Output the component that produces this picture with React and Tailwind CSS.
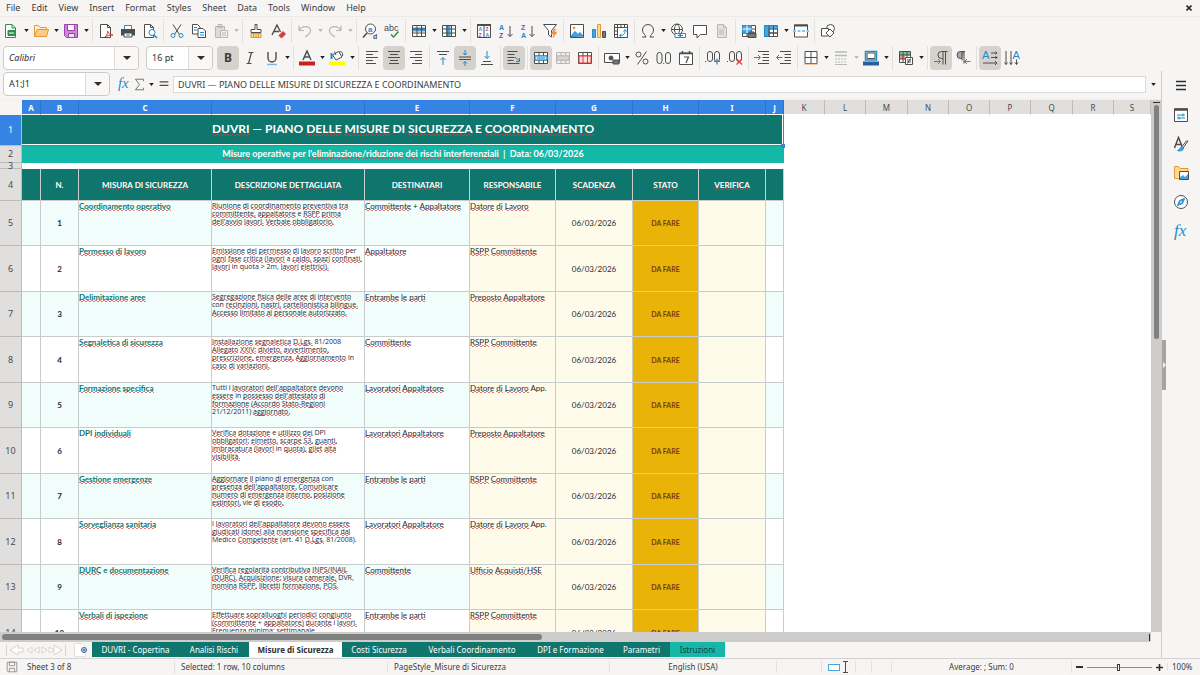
// App.jsx
import { useState } from "react"

const MENUS = ["File", "Edit", "View", "Insert", "Format", "Styles", "Sheet", "Data", "Tools", "Window", "Help"]

const TITOLO = "DUVRI — PIANO DELLE MISURE DI SICUREZZA E COORDINAMENTO"

// Parole che il correttore inglese non segnala
const PAROLE_OK = new Set([
  "a", "e", "i", "I", "in", "per", "con", "Tutti", "DPI", "piano", "Medico", "vie", "quota", "DVR,",
  "—", "E", "DI", "PIANO", "operative", "Data:", "|", "+", ">", "N.", "App.", "(art.",
])

const MISURE = [
  { misura: "Coordinamento operativo", righe: ["Riunione di coordinamento preventiva tra", "committente, appaltatore e RSPP prima", "dell'avvio lavori. Verbale obbligatorio."], dest: "Committente + Appaltatore", resp: "Datore di Lavoro" },
  { misura: "Permesso di lavoro", righe: ["Emissione del permesso di lavoro scritto per", "ogni fase critica (lavori a caldo, spazi confinati,", "lavori in quota > 2m, lavori elettrici)."], dest: "Appaltatore", resp: "RSPP Committente" },
  { misura: "Delimitazione aree", righe: ["Segregazione fisica delle aree di intervento", "con recinzioni, nastri, cartellonistica bilingue.", "Accesso limitato al personale autorizzato."], dest: "Entrambe le parti", resp: "Preposto Appaltatore" },
  { misura: "Segnaletica di sicurezza", righe: ["Installazione segnaletica D.Lgs. 81/2008", "Allegato XXIV: divieto, avvertimento,", "prescrizione, emergenza. Aggiornamento in", "caso di variazioni."], dest: "Committente", resp: "RSPP Committente" },
  { misura: "Formazione specifica", righe: ["Tutti i lavoratori dell'appaltatore devono", "essere in possesso dell'attestato di", "formazione (Accordo Stato-Regioni", "21/12/2011) aggiornato."], dest: "Lavoratori Appaltatore", resp: "Datore di Lavoro App." },
  { misura: "DPI individuali", righe: ["Verifica dotazione e utilizzo dei DPI", "obbligatori: elmetto, scarpe S3, guanti,", "imbracatura (lavori in quota), gilet alta", "visibilità."], dest: "Lavoratori Appaltatore", resp: "Preposto Appaltatore" },
  { misura: "Gestione emergenze", righe: ["Aggiornare il piano di emergenza con", "presenza dell'appaltatore. Comunicare", "numero di emergenza interno, posizione", "estintori, vie di esodo."], dest: "Entrambe le parti", resp: "RSPP Committente" },
  { misura: "Sorveglianza sanitaria", righe: ["I lavoratori dell'appaltatore devono essere", "giudicati idonei alla mansione specifica dal", "Medico Competente (art. 41 D.Lgs. 81/2008)."], dest: "Lavoratori Appaltatore", resp: "Datore di Lavoro App." },
  { misura: "DURC e documentazione", righe: ["Verifica regolarità contributiva INPS/INAIL", "(DURC). Acquisizione: visura camerale, DVR,", "nomina RSPP, libretti formazione, POS."], dest: "Committente", resp: "Ufficio Acquisti/HSE" },
  { misura: "Verbali di ispezione", righe: ["Effettuare sopralluoghi periodici congiunto", "(committente + appaltatore) durante i lavori.", "Frequenza minima: settimanale."], dest: "Entrambe le parti", resp: "RSPP Committente" },
]

const INTESTAZIONI = ["", "N.", "MISURA DI SICUREZZA", "DESCRIZIONE DETTAGLIATA", "DESTINATARI", "RESPONSABILE", "SCADENZA", "STATO", "VERIFICA", ""]

const COL_USATE = ["A", "B", "C", "D", "E", "F", "G", "H", "I", "J"]
const COL_VUOTE = ["K", "L", "M", "N", "O", "P", "Q", "R", "S"]

const FOGLI = [
  { nome: "DUVRI - Copertina", w: "w-[87px]" },
  { nome: "Analisi Rischi", w: "w-[70px]" },
  { nome: "Misure di Sicurezza", w: "w-[93px]" },
  { nome: "Costi Sicurezza", w: "w-[74px]" },
  { nome: "Verbali Coordinamento", w: "w-[112px]" },
  { nome: "DPI e Formazione", w: "w-[85px]" },
  { nome: "Parametri", w: "w-[57px]" },
  { nome: "Istruzioni", w: "w-[55px]" },
]

const K = "#4d4d4b"
const B = "#1e8bcd"
const R = "#e0383a"
const O = "#e8963c"
const G = "#309048"
const V = "#a13db0"
const L = "#b9b8b6"

const T = ({ x, y, s = 7, c = K, children, b }) => (
  <text x={x} y={y} fontSize={s} fill={c} stroke="none" fontFamily="Liberation Sans, sans-serif" fontWeight={b ? 700 : 400}>
    {children}
  </text>
)

const foglio = "M3.5 1.5h6l3 3v10h-9z M9.5 1.5v3h3"
const griglia = "M1.5 2.5h13v11h-13z M1.5 6h13 M1.5 10h13 M6 2.5v11 M10.500 2.500v11"

const ICONS = {
  nuovo: <><path d="M2.500 1.500h6.500l3.500 3.500v9.500h-10z M9 1.500v3.500h3.500" stroke={G} fill="#fff" /><path d="M5 7.500h7v5h-7z" fill={G} stroke={G} /><path d="M6 10h5" stroke="#fff" /></>,
  apri: <><path d="M1.500 13.500v-11h4l1.500 2h6.500v9z" fill="#fff0d0" stroke={O} /><path d="M1.500 13.500l2.500-7h11.500l-2 7z" fill="#f8cf85" stroke={O} /></>,
  salva: <><path d="M1.500 1.500h13v13h-11l-2-2z" fill="#c98bd3" stroke={V} /><path d="M4.500 1.500h7v6h-7z" fill="#fff" stroke={V} /><path d="M5.500 14.500v-4h6v4z" fill="#f3e4f5" stroke={V} /></>,
  pdf: <><path d="M2.500 1.500h7l3 3v10h-10z M9.500 1.500v3h3" fill="#fff" /><path d="M7 14c2-2 3-4 2.500-6 1 3 3 4 5.500 4-3 0-6 .5-8 2z" stroke={R} fill="none" /></>,
  stampa: <><path d="M4.500 6v-3.500h7v3.500" fill="#fff" stroke={B} /><path d="M1 6h14v6.500h-14z" fill={K} stroke="none" /><path d="M4 10h8v4h-8z" fill="#fff" stroke={K} /><path d="M6 12h4" stroke={B} /></>,
  anteprima: <><path d={foglio} fill="#fff" transform="translate(-1 0)" /><circle cx="10" cy="9.500" r="3" fill="#fff" stroke={B} /><path d="M12 12l3 3" stroke={B} strokeWidth="1.500" /></>,
  taglia: <><path d="M4 1.500l6.500 10 M12 1.500l-6.500 10" /><circle cx="4" cy="12.500" r="2" stroke={B} fill="none" /><circle cx="12" cy="12.500" r="2" stroke={B} fill="none" /></>,
  copia: <><path d="M1.500 1.500h5l2.500 2.500v7h-7.500z" fill="#fff" /><path d="M7 5.500h5l2.500 2.500v6.500h-7.500z" fill="#fff" /><path d="M3 4.500h3 M3 7h3 M9 9.500h4 M9 12h4" stroke={B} /></>,
  incolla: <><path d="M2.500 3.500h9v11h-9z M5 1.500h4v3h-4z" fill="#dddcda" stroke={L} /><path d="M7.500 7.500h7v7h-7z" fill="#f1f0ef" stroke={L} /><path d="M9 10h4 M9 12h4" stroke={L} /></>,
  pennello: <><path d="M7 1.500h2v5h4v3h-10v-3h4z" fill="#fff" /><path d="M3 10.500h10v4h-10z" fill="#f8db8f" stroke={O} /><path d="M5.500 11v3 M8 11v3 M10.500 11v3" stroke={O} /></>,
  pulisci: <><path d="M2 12l5-10 3.500 7 M4 8.500h5" strokeWidth="1.400" fill="none" /><path d="M9 12.500l4-4 2.500 2.500-4 4z" fill={R} stroke={R} /></>,
  annulla: <path d="M2 2.500v5h5 M2.500 7c2-4 10-5 11 0 .5 3-2 5-5.500 7" stroke={L} fill="none" strokeWidth="1.200" />,
  ripeti: <path d="M14 2.500v5h-5 M13.500 7c-2-4-10-5-11 0-.5 3 2 5 5.500 7" stroke={L} fill="none" strokeWidth="1.200" />,
  trova: <><circle cx="8.500" cy="6" r="5" fill="#fff" /><path d="M5 10l-4 4.500" strokeWidth="1.500" /><T x="6" y="8.500" s="8" c={B} b>a</T><T x="11" y="15.500" s="7" b>d</T></>,
  abc: <><T x="0" y="8" s="9">abc</T><path d="M7 11.500l2.500 2.500 5-5.500" stroke={G} strokeWidth="1.500" fill="none" /></>,
  riga: <><path d="M1.500 2.500h13v11h-13z" fill="#fff" stroke="none" /><path d="M1.500 4.500h13v4h-13z" fill="#4ba3dc" stroke="none" /><path d={griglia} fill="none" /></>,
  colonna: <><path d="M1.500 2.500h13v11h-13z" fill="#fff" stroke="none" /><path d="M5 2.500h4.500v11h-4.500z" fill="#4ba3dc" stroke="none" /><path d={griglia} fill="none" /></>,
  ordina: <><path d="M1.500 1.500h13v13h-13z M8 3v11.500" fill="#fff" /><path d="M1 2h14" strokeWidth="2" /><T x="2.500" y="8" s="5" c={B} b>A</T><T x="2.500" y="14" s="5" c={V} b>Z</T><T x="9.500" y="8" s="5" c={V} b>Z</T><T x="9.500" y="14" s="5" c={B} b>A</T></>,
  az: <><T x="1" y="6.500" s="7" c={B} b>A</T><T x="1" y="15" s="7" c={V} b>Z</T><path d="M12 3v10.500 M9.500 11l2.500 2.500 2.500-2.500" fill="none" /></>,
  za: <><T x="1" y="6.500" s="7" c={V} b>Z</T><T x="1" y="15" s="7" c={B} b>A</T><path d="M12 3v10.500 M9.500 11l2.500 2.500 2.500-2.500" fill="none" /></>,
  filtro: <><path d="M1.500 1.500h13l-5 6v6.500l-3-2v-4.500z" fill="#fff" /><path d="M12 6l-3 5h3l-1 4 4-6h-3l2-3z" fill={O} stroke={O} strokeWidth=".5" /></>,
  immagine: <><path d="M1.500 1.500h13v13h-13z" fill="#fff" /><path d="M2 13.500l4-5 3 3 2-2 3 3.500z" fill="#4ba3dc" stroke={B} /><circle cx="5" cy="5" r="1.300" fill={O} stroke="none" /></>,
  grafico: <><path d="M1.500 6.500h3v8h-3z" fill="#4ba3dc" stroke={B} /><path d="M6.500 1.500h3v13h-3z" fill="#f8db8f" stroke={O} /><path d="M11.500 8.500h3v6h-3z" fill="#797774" stroke={K} /></>,
  pivot: <><path d="M1.500 1.500h13v13h-13z M1.500 4.500h13 M4.500 1.500v13 M8 1.500v3 M11.500 1.500v3 M1.500 8h3 M1.500 11.500h3" fill="#fff" /><path d="M7 12.500c4 0 5-2 5-5.500 M10.500 8.500l1.500-2 1.500 2 M8.500 11l-2 1.500 2 1.500" stroke={B} fill="none" /></>,
  omega: <path d="M2 14h4c0-2-3.500-3-3.500-7a5.500 5.500 0 0 1 11 0c0 4-3.500 5-3.500 7h4" fill="none" />,
  collegamento: <><circle cx="7" cy="6.500" r="5.500" fill="#fff" /><path d="M1.500 6.500h11 M7 1c-3.500 3-3.500 8 0 11 M7 1c3.500 3 3.500 8 0 11" fill="none" /><path d="M5 10.500h5v4h-5z M10.500 10.500h5v4h-5z" stroke={B} fill="#fff" /><path d="M7.500 12.500h5.500" stroke={B} /></>,
  commento: <path d="M1.500 2.500h13v9h-6l-3.500 3.500v-3.500h-3.500z" fill="#fff" />,
  intest: <><path d={foglio} fill="#e3e2e0" stroke={L} /><path d="M5 7h5 M5 9h5 M5 11h5" stroke={L} /></>,
  areaStampa: <><path d={griglia} fill="#fff" /><path d="M1.500 2.500h9v7.500h-9z" fill="#4ba3dc" stroke={B} /><path d="M1.500 6h9 M6 2.500v7.500" stroke="#fff" /><path d="M7 10.500h8v4h-8z M9 9h4v1.500h-4z" fill="#797774" /></>,
  blocca: <><path d={griglia} fill="#fff" /><path d="M1.500 2.500h13v3.500h-8.500v7.500h-4.500z" fill="#4ba3dc" stroke={B} /><path d="M6 2.500v11 M10.500 2.500v11 M6 10h8.500" fill="none" /></>,
  dividi: <><path d="M1.500 2h13v12h-13z" fill="#fff" stroke={K} /><path d="M1 2.500h14" strokeWidth="2" /><path d="M0 8h16" stroke="#fff" strokeWidth="2" /><path d="M0 8h16" stroke={B} strokeDasharray="3 1.500" /></>,
  forme: <><circle cx="10.500" cy="5.500" r="4" fill="#fff" /><path d="M1.500 5.500h7v7.500h-7z" fill="#fff" /><path d="M10 6l4 4-4 4-4-4z" fill="#fff" /></>,
  corsivo: <path d="M6.500 2.500h5 M4.500 13.500h5 M9.500 2.500l-3 11" fill="none" strokeWidth="1.200" />,
  sottolineato: <><path d="M4 2v6a4 4 0 0 0 8 0v-6" fill="none" strokeWidth="1.400" /><path d="M3 14.500h10" stroke="#7db9e8" strokeWidth="1.400" /></>,
  colore: <><path d="M4 10l4-9 4 9 M5.500 7h5" fill="none" strokeWidth="1.500" /><path d="M0 11.500h16v4h-16z" fill="#c9211e" stroke="none" /></>,
  evidenzia: <><path d="M3.500 5l6-3.500 3.500 5.500-6 3z" fill="#fff" /><path d="M7 5l-1.500-3.500 M10 2c3-1 4 1 3.500 4" fill="none" /><path d="M2.500 3v6" stroke={B} strokeWidth="2" /><path d="M0 11.500h16v4h-16z" fill="#ff0" stroke="none" /></>,
  sinistra: <path d="M2 1.500h12 M2 4.500h7 M2 7.500h12 M2 10.500h7 M2 13.500h10" />,
  centro: <path d="M2 1.500h12 M4 4.500h8 M2 7.500h12 M4 10.500h8 M3 13.500h10" />,
  destra: <path d="M2 1.500h12 M7 4.500h7 M2 7.500h12 M7 10.500h7 M4 13.500h10" />,
  alto: <><path d="M2 1.500h12 M4 4.500h8" /><path d="M8 15v-7.500 M5.500 10l2.500-2.500 2.500 2.500" stroke={B} fill="none" /></>,
  mezzo: <><path d="M2 7h12 M2 9.500h12" /><path d="M8 0v5 M6 3l2 2 2-2 M8 16v-4.500 M6 13.500l2-2 2 2" stroke={B} fill="none" /></>,
  basso: <><path d="M4 11.500h8 M2 14.500h12" /><path d="M8 1v7.500 M5.500 6l2.500 2.500 2.500-2.500" stroke={B} fill="none" /></>,
  aCapo: <><path d="M1.500 1.500h10 M1.500 4.500h7 M1.500 7.500h7 M1.500 10.500h6 M1.500 13.500h12" /><path d="M9 7l4.500 4 M13.500 8v3.500h-3.500" stroke={B} fill="none" /></>,
  unisciC: <><path d={griglia} fill="#fff" /><path d="M2 6h12v4h-12z" fill="#d5e9f8" stroke={B} /><path d="M4 8h8" stroke={B} /></>,
  unisci: <><path d={griglia} fill="#eeedec" stroke={L} /><path d="M2 6h12v4h-12z" fill="#d8d7d5" stroke={L} /></>,
  dividiC: <><path d={griglia} fill="#fff" /><path d="M2 6h12v7h-12z M6 6v7 M10.500 6v7" fill="#fbe1e0" stroke={R} /></>,
  valuta: <><path d="M.5 3.500h15v9h-15z" fill="#fff" /><circle cx="7" cy="8" r="2" fill={K} /><path d="M9 10h6v4h-6z" fill="#797774" /></>,
  percento: <><circle cx="4.500" cy="4.500" r="2.500" fill="none" /><circle cx="11.500" cy="11.500" r="2.500" fill="none" /><path d="M12.500 1.500l-9 13" /></>,
  numero: <><rect x="1" y="2.500" width="5" height="11" rx="2.500" fill="none" /><rect x="9.500" y="2.500" width="5" height="11" rx="2.500" fill="none" /><path d="M7.200 13.500h1" strokeWidth="1.200" /></>,
  data: <><path d="M1.500 3h13v11.500h-13z" fill="#fff" /><path d="M1.500 3.500h13 M4.500 1v2 M11.500 1v2" strokeWidth="1.500" /><path d="M6 7h4.500l-2.500 6" fill="none" strokeWidth="1.200" /></>,
  piuDec: <><rect x="2.500" y="1.500" width="5" height="10" rx="2.500" fill="none" /><rect x="9.500" y="1.500" width="5" height="10" rx="2.500" fill="none" /><path d="M0 11.500h1" /><path d="M12 8.500v6 M9 11.500h6" stroke={B} strokeWidth="1.200" /></>,
  menoDec: <><rect x="2.500" y="1.500" width="5" height="10" rx="2.500" fill="none" /><rect x="9.500" y="1.500" width="5" height="10" rx="2.500" fill="none" /><path d="M0 11.500h1" /><path d="M9.500 9l5.500 5.500 M15 9l-5.500 5.500" stroke={R} strokeWidth="1.200" /></>,
  rientroP: <><path d="M4 1.500h11 M8.500 4.500h6.500 M8.500 7.500h6.500 M8.500 10.500h6.500 M4 13.500h11" /><path d="M0 7.500h6 M4 5l2.500 2.500-2.500 2.500" stroke={B} fill="none" /></>,
  rientroM: <><path d="M4 1.500h11 M8.500 4.500h6.500 M8.500 7.500h6.500 M8.500 10.500h6.500 M4 13.500h11" /><path d="M.5 7.500h6 M3 5l-2.500 2.500 2.500 2.500" stroke={B} fill="none" /></>,
  bordi: <><path d="M2 1.500h12v12h-12z M8 1.500v12 M2 7.500h12" fill="#fff" /><path d="M1.500 14h13" stroke={O} /></>,
  stileLinea: <><path d="M2 2h12 M2 5.500h12" stroke={L} strokeWidth="1.500" /><path d="M2 9h12 M2 12h12" stroke={L} strokeDasharray="2 1" /><path d="M2 14.500h12" stroke={L} /></>,
  coloreBordo: <><path d="M2.500 1.500h11v8.500h-11z" fill="#fff" stroke={B} strokeWidth="1.500" /><path d="M4 3h8v5.500h-8z" fill="#fff" /><path d="M0 11.500h16v4h-16z" fill="#2a6099" stroke="none" /></>,
  condiz: <><path d="M1.500 1.500h11v11h-11z" fill="#fff" /><path d="M2 2h10v3.500h-10z" fill="#7cc48b" stroke="none" /><path d="M2 5.500h5v3.500h-5z" fill="#f08a8a" stroke="none" /><path d="M1.500 5h11 M1.500 9h11 M5 1.500v11 M9 1.500v11" fill="none" /><path d="M7.500 7.500h7v7h-7z M9 10h4 M9 12h4 M12.500 8.500l-3 5" fill="#fff" /></>,
  ltr: <><path d="M14.500 1.500h-6a3.500 3.500 0 0 0 0 7h1.500 M10 1.500v13 M12.500 1.500v13" fill="none" /><path d="M1 11.500h6 M5 9l2.500 2.500-2.500 2.500" stroke={B} fill="none" /></>,
  rtl: <><path d="M9.500 1.500h-4a3 3 0 0 0 0 7h1.500z" fill="#a9a8a6" stroke="none" /><path d="M10 1.500h-4.500a3 3 0 0 0 0 7h1.500 M7 1.500v9 M9 1.500v12" fill="none" /><path d="M9.500 11.500h6 M12 9l-2.500 2.500 2.500 2.500" stroke={B} fill="none" /></>,
  orizz: <><T x="0" y="9" s="11" c={B}>A</T><path d="M9 3h6 M13.500 1.500l1.500 1.500-1.500 1.500 M9 7.500h6 M13.500 6l1.500 1.500-1.500 1.500 M1 13h14 M13 11l2 2-2 2" fill="none" /></>,
  vert: <><T x="8.500" y="9" s="11" c={B}>A</T><path d="M2 1v13.500 M.5 12.500l1.500 2 1.500-2 M7 1v13.500 M5.500 12.500l1.500 2 1.500-2 M12.500 9.500v5 M11 12.500l1.500 2 1.500-2" fill="none" /></>,
  hamburger: <path d="M3 3.500h10 M3 7.500h10 M3 11.500h10" strokeWidth="1.600" stroke="#2e2e2e" />,
  proprieta: <><path d="M1.500 2h13v12.500h-13z" fill="#fff" /><path d="M1 2.500h14" strokeWidth="2.500" /><path d="M4 8h8 M4 11h8 M10 6.500v3 M6 9.500v3" stroke={B} /></>,
  stili: <><path d="M1.500 12l4-10.500 4 10 M3 8.500h5.500" strokeWidth="1.500" fill="none" /><path d="M15 5l-5 7-1.500-1 5-6z" fill="#fff" /><path d="M9 11c-2 0-2 3-4.500 3.500 3 1 6 0 6-2.500z" fill="#4ba3dc" stroke={B} /></>,
  galleria: <><path d="M1.500 13.500v-12h4l1.500 2h8v3 M1.500 13.500h5" fill="#f8db8f" stroke={O} /><path d="M6.500 6.500h9v8h-9z" fill="#fff" /><path d="M7 14v-2l3-2 2 2 3-3v5z" fill="#4ba3dc" stroke="none" /></>,
  navigatore: <><circle cx="8" cy="8" r="6.500" fill="#fff" /><path d="M11.500 4.500l-2 5-5 2 2-5z" fill="#4ba3dc" stroke={B} /><circle cx="8" cy="8" r=".8" fill="#fff" stroke="none" /></>,
  fx: <text x="1" y="12.500" fontSize="17" fill={B} stroke="none" fontFamily="Liberation Serif, serif" fontStyle="italic">fx</text>,
  somma: <path d="M13 4v-2.500h-10l5 6.500-5 6.500h10v-2.500" fill="none" stroke="#5c5b59" />,
  uguale: <path d="M3 5.500h10 M3 9.500h10" strokeWidth="1.500" />,
  salvato: <path d="M2.500 2.500h11v11h-10l-1-1z M5 2.500h6v4h-6z M5 13.500v-4h6v4" fill="none" stroke="#8e8d8b" />,
}

function Icona({ nome, className = "w-4 h-4" }) {
  return (
    <svg viewBox="0 0 16 16" className={`${className} shrink-0 overflow-visible`} stroke={K} fill={K} aria-hidden="true">
      {ICONS[nome]}
    </svg>
  )
}

function Bottone({ nome, attivo, children }) {
  return (
    <button aria-label={nome} className={`w-[22px] h-6 shrink-0 flex items-center justify-center rounded ${attivo ? "bg-[#d5d1cd]" : ""}`}>
      {children || <Icona nome={nome} />}
    </button>
  )
}

function Freccia({ spenta, className = "w-2" }) {
  return (
    <button aria-label="Opzioni" className={`${className} h-6 shrink-0 flex items-center justify-center`}>
      <svg viewBox="0 0 6 4" className="w-[5px] h-[3px]" fill={spenta ? L : "#1f1f1f"} aria-hidden="true"><path d="M0 0h6l-3 4z" /></svg>
    </button>
  )
}

const Sep = () => <span className="w-[5px] h-6 shrink-0 flex justify-center"><span className="w-px h-full bg-[#e3e1df]" /></span>

// "nome" = icona, "nome*" = premuta, "v" = freccia, "x" = freccia spenta, "|" = separatore
function Strumenti({ voci }) {
  return voci.split(" ").map((v, i) => {
    if (v === "|") return <Sep key={i} />
    if (v === "v") return <Freccia key={i} />
    if (v === "x") return <Freccia key={i} spenta />
    return <Bottone key={i} nome={v.replace("*", "")} attivo={v.endsWith("*")} />
  })
}

function Combo({ label, className, testo = "", opzioni }) {
  return (
    <div className={`${className} h-6 shrink-0 grid rounded border border-[#cdc9c5] bg-white`}>
      <select aria-label={label} className={`col-start-1 row-start-1 appearance-none pl-[5px] text-[9px] text-[#2e2e2e] outline-none ${testo}`}>
        {opzioni.map((o) => <option key={o}>{o}</option>)}
      </select>
      <span className="col-start-1 row-start-1 justify-self-end w-6 border-l border-[#dedbd8] bg-[#f9f8f7] rounded-r flex items-center justify-center pointer-events-none">
        <svg viewBox="0 0 8 4" className="w-2 h-1" fill="#2e2e2e" aria-hidden="true"><path d="M0 0h8l-4 4z" /></svg>
      </span>
    </div>
  )
}

// Sottolinea in rosso le parole sconosciute al correttore
const ONDA = "bg-[linear-gradient(45deg,transparent_35%,#dc3c3ab0_35%_65%,transparent_65%),linear-gradient(135deg,transparent_35%,#dc3c3ab0_35%_65%,transparent_65%)] bg-size-[4px_2px] bg-repeat-x [background-position:0_100%,2px_100%]"

function Testo({ children }) {
  return children.split(" ").map((p, i) => {
    const ok = PAROLE_OK.has(p) || /^[\d(]?[\d/]+\)?[.m,]*$/.test(p)
    return (
      <span key={i}>
        {i > 0 && " "}
        {ok ? p : <span className={ONDA}>{p}</span>}
      </span>
    )
  })
}

function Foglio() {
  const testaCol = "h-[15px] p-0 border-b border-b-white text-[8px] leading-[13px]"
  const testaRiga = "p-0 border-r border-b border-[#bdbcba] text-[9px] font-normal text-[#4a4a4a]"
  const cella = "p-0 border-r border-b border-[#c8cccb]"
  return (
    <table className="w-full table-fixed border-separate border-spacing-0 whitespace-nowrap">
      <colgroup>
        <col className="w-[22px]" />
        <col className="w-[19px]" />
        <col className="w-[38px]" />
        <col className="w-[133px]" />
        <col className="w-[153px]" />
        <col className="w-[105px]" />
        <col className="w-[86px]" />
        <col className="w-[77px]" />
        <col className="w-[66px]" />
        <col className="w-[67px]" />
        <col className="w-[18px]" />
        {COL_VUOTE.slice(0, -1).map((c) => <col key={c} className={c === "M" || c === "Q" ? "w-[42px]" : "w-[41px]"} />)}
        <col />
      </colgroup>
      <thead>
        <tr>
          <td className="p-0 bg-[#f6f5f4]" />
          {COL_USATE.map((c) => <th key={c} className={`${testaCol} bg-[#3584e4] border-r border-r-[#2b73cc] text-white font-bold`}>{c}</th>)}
          {COL_VUOTE.map((c) => <th key={c} className={`${testaCol} bg-[#e0dfde] border-r border-r-[#bdbcba] text-[#4a4a4a] font-normal`}>{c}</th>)}
        </tr>
      </thead>
      <tbody className="font-[Lato,sans-serif]">
        <tr>
          <th className={`${testaRiga} h-[31px] bg-[#3584e4] font-bold text-white font-['Noto_Sans',sans-serif]`}>1</th>
          <td colSpan={10} className="p-0 pb-[3px] bg-[#0f766e] text-white text-center font-bold text-[12px] relative">
            <Testo>{TITOLO}</Testo>
            {/* Selezione */}
            <span className="absolute inset-0 border-r border-b border-[#3584e4] pointer-events-none">
              <span className="block h-full border-r border-b border-white" />
            </span>
            <span className="absolute -right-px -bottom-[2px] w-1 h-1 bg-[#3584e4]" />
          </td>
        </tr>
        <tr>
          <th className={`${testaRiga} h-[17px] bg-[#e0dfde] font-['Noto_Sans',sans-serif] leading-[14px]`}>2</th>
          <td colSpan={10} className="p-0 bg-[#14b8a6] text-white text-center align-top font-bold text-[9px] leading-[15px] whitespace-pre">
            <Testo>Misure operative per l'eliminazione/riduzione dei rischi interferenziali</Testo>
            {"  |  Data: 06/03/2026"}
          </td>
        </tr>
        <tr>
          <th className={`${testaRiga} h-[6px] bg-[#e0dfde] font-['Noto_Sans',sans-serif] text-[8px] leading-[5px]`}>3</th>
        </tr>
        <tr>
          <th className={`${testaRiga} h-8 bg-[#e0dfde] font-['Noto_Sans',sans-serif]`}>4</th>
          {INTESTAZIONI.map((t, i) => (
            <th key={i} className={`${cella} bg-[#0f766e] text-white font-bold text-[8px]`}>{t && <Testo>{t}</Testo>}</th>
          ))}
        </tr>
        {MISURE.map((m, i) => {
          const sfondo = i % 2 ? "bg-white" : "bg-[#f0fdfa]"
          return (
            <tr key={m.misura} className="text-[#1f2937] text-[8px] leading-[10px]">
              <th className={`${testaRiga} ${i % 2 ? "h-[46px]" : "h-[45px]"} bg-[#e0dfde] font-['Noto_Sans',sans-serif]`}>{i + 5}</th>
              <td className={`${cella} ${sfondo}`} />
              <td className={`${cella} ${sfondo} text-center font-bold`}>{i + 1}</td>
              <td className={`${cella} ${sfondo} align-top font-bold text-[#0f766e]`}><Testo>{m.misura}</Testo></td>
              <td className={`${cella} ${sfondo} align-top text-[7px] leading-[8px] pt-px font-['Open_Sans',sans-serif]`}>
                {m.righe.map((r) => <div key={r}><Testo>{r}</Testo></div>)}
              </td>
              <td className={`${cella} ${sfondo} align-top`}><Testo>{m.dest}</Testo></td>
              <td className={`${cella} bg-[#fffbeb] align-top`}><Testo>{m.resp}</Testo></td>
              <td className={`${cella} bg-[#fffbeb] text-center`}>06/03/2026</td>
              <td className={`${cella} bg-[#eab308] text-center font-bold text-[7px] text-[#713f12]`}>DA FARE</td>
              <td className={`${cella} bg-[#fffbeb]`} />
              <td className={`${cella} ${sfondo}`} />
            </tr>
          )
        })}
      </tbody>
    </table>
  )
}

function BarraFogli() {
  const [attivo, setAttivo] = useState("Misure di Sicurezza")
  return (
    <div className="h-4 shrink-0 flex">
      <div className="w-[74px] flex items-center pl-[6px]">
        <svg viewBox="0 0 60 12" className="w-[60px] h-3" fill="#fff" stroke="#d6d4d2" aria-hidden="true">
          <path d="M.5.5v11 M12 1l-8 5 8 5v-3h5v-4h-5z M26 3l-5 3 5 3z M33 3l-5 3 5 3z M36 3l5 3-5 3z M43 3l5 3-5 3z M48 1l8 5-8 5z M59.500.5v11" />
        </svg>
      </div>
      <button aria-label="Nuovo foglio" className="w-[18px] h-full flex items-center">
        <svg viewBox="0 0 14 14" className="w-[14px] h-[14px]" aria-hidden="true">
          <path d="M.5.5h8l3 3v10h-11z" fill="#fff" stroke="#e3e1df" />
          <circle cx="10" cy="7" r="2.500" fill="#fff" stroke="#2c5aa0" />
          <path d="M10 5.500v3 M8.500 7h3" stroke="#2c5aa0" />
        </svg>
      </button>
      {FOGLI.map((f) => (
        <button
          key={f.nome}
          onClick={() => setAttivo(f.nome)}
          className={`${f.w} h-[15px] leading-[15px] text-[8px] whitespace-nowrap ${
            f.nome === attivo ? "bg-white font-bold text-[#2e2e2e]" : f.nome === "Istruzioni" ? "bg-[#14b8a6] text-[#14403b]" : "bg-[#0f766e] text-white"
          }`}
        >
          {f.nome}
        </button>
      ))}
    </div>
  )
}

export default function App() {
  const [zoom, setZoom] = useState(100)

  return (
    <div className="h-screen flex flex-col overflow-hidden bg-[#f6f5f4] text-[#3c3c3c] font-['Noto_Sans',sans-serif]">
      {/* Menu */}
      <nav className="h-[17px] shrink-0 flex items-center gap-[11px] pl-[6px] pr-[5px] text-[9px] border-b border-[#ebeae9]">
        {MENUS.map((m) => <button key={m}>{m}</button>)}
        <button aria-label="Chiudi" className="ml-auto mr-[3px]">
          <svg viewBox="0 0 6 6" className="w-[6px] h-[6px]" stroke="#2e2e2e" strokeWidth="1.600" aria-hidden="true"><path d="M.5.5l5 5 M5.500.5l-5 5" /></svg>
        </button>
      </nav>

      {/* Barra standard */}
      <div className="h-[27px] shrink-0 flex items-center">
        <Strumenti voci="nuovo v apri v salva v | pdf stampa anteprima | taglia copia incolla x | pennello pulisci | annulla x ripeti x | trova abc | riga v colonna v | ordina az za filtro | immagine grafico pivot | omega v collegamento commento intest | areaStampa blocca v dividi | forme" />
      </div>

      {/* Formattazione */}
      <div className="h-[27px] shrink-0 flex items-center pl-[3px]">
        <Combo label="Carattere" className="w-[136px] mr-[7px]" testo="italic" opzioni={["Calibri"]} />
        <Combo label="Dimensione" className="w-[67px] mr-[4px]" opzioni={["16 pt"]} />
        <Bottone nome="Grassetto" attivo><span className="text-[12px] font-bold leading-none">B</span></Bottone>
        <Strumenti voci="corsivo sottolineato v | colore v evidenzia v | sinistra centro* destra | alto mezzo* basso | aCapo* | unisciC* unisci dividiC | valuta v percento numero data | piuDec menoDec | rientroP rientroM | bordi v stileLinea x coloreBordo v | condiz v | ltr* rtl | orizz* vert" />
      </div>

      <div className="flex-1 min-h-0 flex">
        <main className="flex-1 min-w-0 flex flex-col">
          {/* Barra della formula */}
          <div className="h-[29px] shrink-0 flex items-center pl-[3px] pb-[2px] border-b border-[#f1f0ef]">
            <div className="w-[107px] h-6 flex rounded border border-[#cdc9c5] bg-white mr-[6px]">
              <input aria-label="Casella nome" defaultValue="A1:J1" className="flex-1 min-w-0 pl-[5px] text-[9px] text-[#2e2e2e] outline-none" />
              <button aria-label="Elenco nomi" className="w-6 border-l border-[#dedbd8] bg-[#f9f8f7] rounded-r flex items-center justify-center">
                <svg viewBox="0 0 8 4" className="w-2 h-1" fill="#2e2e2e" aria-hidden="true"><path d="M0 0h8l-4 4z" /></svg>
              </button>
            </div>
            <button aria-label="Funzioni" className="w-4 flex justify-center"><Icona nome="fx" className="w-[14px] h-[14px]" /></button>
            <button aria-label="Somma" className="w-[15px] flex justify-center"><Icona nome="somma" className="w-[13px] h-[13px]" /></button>
            <Freccia />
            <button aria-label="Accetta" className="w-[18px] flex justify-center"><Icona nome="uguale" className="w-[14px] h-[14px]" /></button>
            <input aria-label="Formula" defaultValue={TITOLO} className="flex-1 min-w-0 h-[17px] border border-[#dcdad8] bg-white pl-1 text-[9px] text-[#3c3c3c] outline-none" />
            <Freccia className="w-[15px]" />
          </div>

          <div className="flex-1 min-h-0 flex">
            <div className="flex-1 min-w-0 bg-white overflow-hidden">
              <Foglio />
            </div>
            <div className="w-[10px] shrink-0 bg-[#cdcccb] flex flex-col items-center">
              <span className="w-[7px] h-px my-[2px] bg-[#2e2e2e]" />
              <span className="w-[5px] h-[44%] rounded-full bg-[#808080]" />
            </div>
          </div>

          <div className="h-[10px] shrink-0 flex">
            <div className="flex-1 bg-[#cdcccb] flex items-center justify-between pl-[2px] pr-px">
              <span className="w-[47%] h-[6px] rounded-full bg-[#808080]" />
              <span className="w-px h-[7px] bg-[#2e2e2e]" />
            </div>
            <span className="w-[10px]" />
          </div>
          <BarraFogli />
        </main>

        {/* Barra laterale */}
        <aside className="w-[39px] shrink-0 flex border-l border-[#cdcccb]">
          <span className="w-1 h-[50px] self-center shrink-0 bg-[#a5a4a2] flex items-center"><svg viewBox="0 0 4 6" className="w-1 h-[6px]" fill="#f6f5f4" aria-hidden="true"><path d="M1 0l3 3-3 3z" /></svg></span>
          <div className="flex-1 flex flex-col items-center pr-1">
            {["hamburger", "proprieta", "stili", "galleria", "navigatore", "fx"].map((n) => (
              <button key={n} aria-label={n} className="h-[29px] flex items-center"><Icona nome={n} /></button>
            ))}
          </div>
        </aside>
      </div>

      {/* Barra di stato */}
      <footer className="h-[17px] shrink-0 flex items-center text-[8px] whitespace-nowrap border-t border-[#d5d3d1] divide-x divide-[#e3e1df]">
        <div className="w-[175px] flex items-center gap-2 pl-[5px]"><Icona nome="salvato" className="w-[14px] h-[14px]" />Sheet 3 of 8</div>
        <div className="w-[213px] pl-[6px]">Selected: 1 row, 10 columns</div>
        <div className="w-[222px] pl-[6px]">PageStyle_Misure di Sicurezza</div>
        <div className="w-[167px] text-center">English (USA)</div>
        <div className="w-[45px] h-3" />
        <div className="w-[34px] flex items-center justify-center gap-[2px]">
          <span className="w-3 h-[7px] border border-[#4ba3dc] bg-white" />
          <svg viewBox="0 0 7 12" className="w-[7px] h-3" fill="none" stroke={K} aria-hidden="true"><path d="M1 .5h5 M1 11.500h5 M3.500.5v11" /></svg>
        </div>
        <div className="w-4 h-3" />
        <div className="w-5 h-3" />
        <div className="flex-1 text-center">Average: ; Sum: 0</div>
        <div className="w-[96px] flex items-center justify-center gap-1">
          <button aria-label="Riduci" className="w-[7px] h-[2px] bg-[#2e2e2e]" onClick={() => setZoom(zoom - 10)} />
          <input
            type="range"
            aria-label="Zoom"
            min="0"
            max="205"
            value={zoom}
            onChange={(e) => setZoom(Number(e.target.value))}
            className="w-[65px] h-2 appearance-none bg-transparent [&::-webkit-slider-runnable-track]:h-px [&::-webkit-slider-runnable-track]:bg-[#8e8d8b] [&::-webkit-slider-thumb]:appearance-none [&::-webkit-slider-thumb]:w-[3px] [&::-webkit-slider-thumb]:h-[7px] [&::-webkit-slider-thumb]:-mt-[3px] [&::-webkit-slider-thumb]:border [&::-webkit-slider-thumb]:border-[#3c3c3c] [&::-webkit-slider-thumb]:bg-white"
          />
          <button aria-label="Ingrandisci" onClick={() => setZoom(zoom + 10)}>
            <svg viewBox="0 0 7 7" className="w-[7px] h-[7px]" stroke="#2e2e2e" strokeWidth="1.600" aria-hidden="true"><path d="M0 3.500h7 M3.500 0v7" /></svg>
          </button>
        </div>
        <div className="w-[32px] pl-1">{zoom}%</div>
      </footer>
    </div>
  )
}
